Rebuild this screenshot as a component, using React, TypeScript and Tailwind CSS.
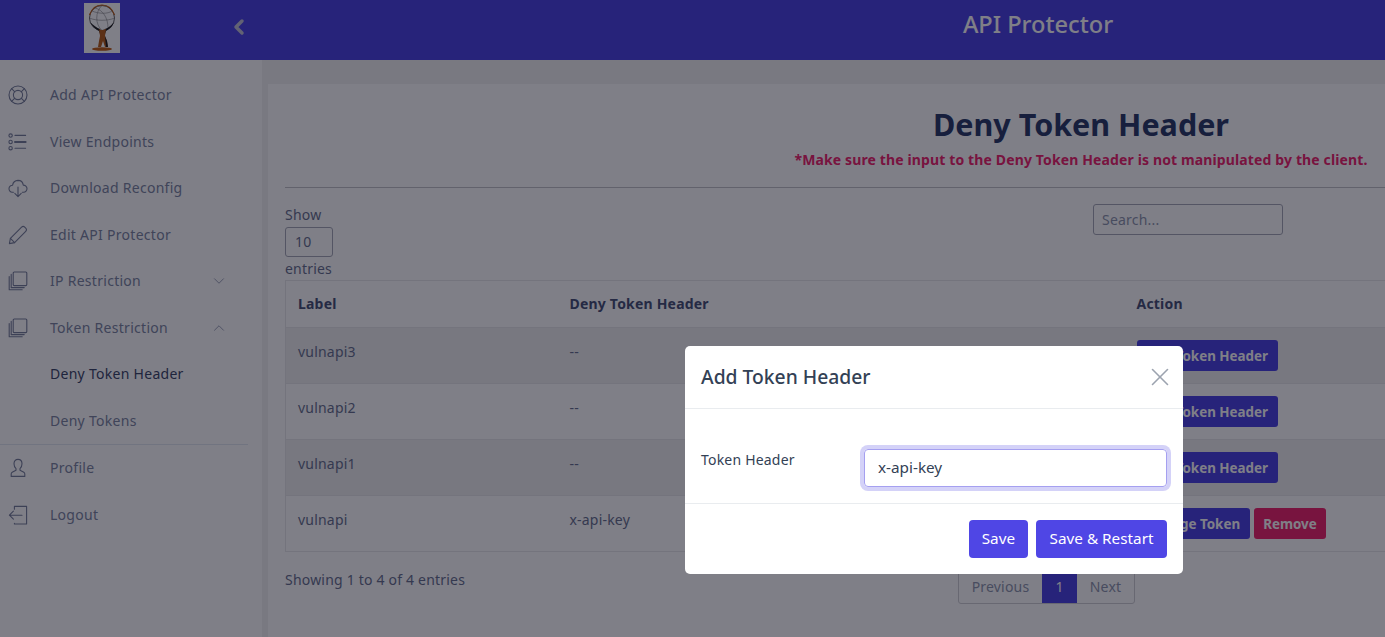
import { ChevronDown, ChevronLeft, ChevronUp, X } from "lucide-react";
import type { ReactNode } from "react";

const FONT = "font-['Noto_Sans',sans-serif]";

function Svg({ children }: { children: ReactNode }) {
  return (
    <svg viewBox="0 0 20 20" className="w-5 h-5 shrink-0" fill="none" stroke="currentColor" strokeWidth="1.1" strokeLinecap="round" strokeLinejoin="round">
      {children}
    </svg>
  );
}

const BuoyIcon = () => (
  <Svg>
    <circle cx="10" cy="10" r="9" />
    <circle cx="10" cy="10" r="4.6" />
    <path d="M3.6 3.6l3.2 3.2M16.4 3.6l-3.2 3.2M3.6 16.4l3.2-3.2M16.4 16.4l-3.2-3.2" />
  </Svg>
);
const ListIcon = () => (
  <Svg>
    <circle cx="2.6" cy="3.6" r="1.7" />
    <circle cx="2.6" cy="10" r="1.7" />
    <circle cx="2.6" cy="16.2" r="1.7" />
    <path d="M7 3.4h10.6M7 16.2h10.6" />
    <path d="M7 10h10.6" strokeWidth="2" />
  </Svg>
);
const CloudIcon = () => (
  <Svg>
    <path d="M5.4 14.2H4.2A3.4 3.4 0 0 1 1 10.6a3.5 3.5 0 0 1 3.6-3.4A5.6 5.6 0 0 1 10 2.4a5.5 5.5 0 0 1 5.3 4.700 3.6 3.6 0 0 1 3.7 3.5 3.5 3.5 0 0 1-3.4 3.6h-1.2" />
    <path d="M10 9v9.4M6.8 15.4l3.2 3.2 3.2-3.2" />
  </Svg>
);
const PenIcon = () => (
  <Svg>
    <path d="M1.4 18.6l1-5.2L13.6 2.2a2.2 2.2 0 0 1 3.1 0l1 1a2.2 2.2 0 0 1 0 3.1L6.6 17.6z" />
    <path d="M2.4 13.4l4.2 4.2" />
  </Svg>
);
const StackIcon = () => (
  <Svg>
    <rect x="5.2" y="1" width="13.6" height="13.6" rx="1" />
    <path d="M3.2 3.4v13.2h13M1.2 5.6v13.2h13" />
  </Svg>
);
const UserIcon = () => (
  <Svg>
    <path d="M10 1.4c2.6 0 4 2 4 4.4 0 2-.8 3.800-2 4.800v1.600l3.800 2c.8.4 1 .9 1 1.800v2.400H3.200v-2.400c0-.9.200-1.400 1-1.800L8 12.200v-1.600c-1.200-1-2-2.800-2-4.800 0-2.400 1.400-4.400 4-4.400z" />
  </Svg>
);
const LogoutIcon = () => (
  <Svg>
    <path d="M6.4 4.200V1.400h12.200v17.600H6.400v-.6" />
    <path d="M14 10.200H1.400M5.400 6.200l-4 4 4 4" />
  </Svg>
);

const AtlasLogo = () => (
  <div className="w-9 h-[50px] bg-white flex">
    <svg viewBox="0 0 36 50" className="w-9 h-[50px]" fill="none">
      <circle cx="18" cy="15" r="12.500" stroke="#555" strokeWidth="0.9" />
      <path d="M5.500 15c6 3 19 3 25 0M8 8c7 3 16 3 20 0M18 2.500c-7 6-7 19 0 25M11 5c8 2 13 10 13 20" stroke="#888" strokeWidth="0.6" />
      <path d="M5.500 12C8 5 13 2 18 2s10 3 12.500 10" stroke="#c2621a" strokeWidth="1.200" />
      <path d="M6 19c2 4 5 7 9 9l1 3h1l-1-5c-3-1-7-4-10-7zM30 19c-1 4-4 7-8 9l-1 3h-1l1-5c3-1 7-4 9-7z" fill="#222" />
      <path d="M15 26l2 1h2l3-1-1 7 2 5 1 6h-3l-2-6-2 6h-3l1-6 1-5z" fill="#b8601c" />
      <path d="M21 33l2 5 1 6h-2z" fill="#222" />
      <ellipse cx="18" cy="46" rx="10" ry="1.800" fill="#c2621a" />
    </svg>
  </div>
);

function NavItem({ icon, label, active, right }: { icon?: ReactNode; label: string; active?: boolean; right?: ReactNode }) {
  return (
    <a href="#" className={`flex items-center h-[46.500px] pl-2 pr-5 text-sm tracking-[0.28px] ${active ? "text-[#3f4a6b]" : "text-[#8088a3]"}`}>
      <span className="w-[42px] flex text-[#7a829c]">{icon}</span>
      <span className="flex-1">{label}</span>
      {right}
    </a>
  );
}

function Btn({ children, red }: { children: ReactNode; red?: boolean }) {
  return (
    <button className={`h-[31px] px-[9.500px] pt-[2px] rounded-[3px] text-[13.400px] font-bold text-white ${red ? "bg-[#f1296f]" : "bg-[#4f46e5]"}`}>
      {children}
    </button>
  );
}

const rows = [
  { label: "vulnapi3", header: "--", striped: true },
  { label: "vulnapi2", header: "--" },
  { label: "vulnapi1", header: "--", striped: true },
  { label: "vulnapi", header: "x-api-key", set: true },
];

export default function App() {
  return (
    <div className={`w-[1385px] h-[637px] overflow-hidden ${FONT}`}>
      <div className="relative w-[1868px] h-[637px] flex flex-col bg-[#f2f2f2]">
        {/* Top bar */}
        <header className="h-[60px] shrink-0 bg-[#4f46e5] flex items-center">
          <div className="w-[250px] pl-[84px] flex items-start justify-between h-full pt-[3px]">
            <AtlasLogo />
            <ChevronLeft className="w-6 h-6 mt-3 -mr-[1px] text-[#c4c4d8]" strokeWidth={3.500} />
          </div>
          <h1 className="flex-1 pr-[42px] pb-[10px] text-center text-[23.600px] font-medium text-white">API Protector</h1>
        </header>

        <div className="flex flex-1 min-h-0">
          {/* Sidebar */}
          <aside className="w-[262px] shrink-0 bg-white pt-[12px]">
            <nav className="w-[248px]">
              <NavItem icon={<BuoyIcon />} label="Add API Protector" />
              <NavItem icon={<ListIcon />} label="View Endpoints" />
              <NavItem icon={<CloudIcon />} label="Download Reconfig" />
              <NavItem icon={<PenIcon />} label="Edit API Protector" />
              <NavItem icon={<StackIcon />} label="IP Restriction" right={<ChevronDown className="w-[18px] h-[18px]" strokeWidth={1} />} />
              <NavItem icon={<StackIcon />} label="Token Restriction" right={<ChevronUp className="w-[18px] h-[18px]" strokeWidth={1} />} />
              <NavItem label="Deny Token Header" active />
              <NavItem label="Deny Tokens" />
              <div className="border-t border-[#e2e8f0]" />
              <NavItem icon={<UserIcon />} label="Profile" />
              <NavItem icon={<LogoutIcon />} label="Logout" />
            </nav>
          </aside>

          {/* Main */}
          <main className="flex-1 min-w-0 pl-[6px] pt-[24px]">
            <section className="w-[1626px] h-[600px] bg-white px-[17px] pt-[20px]">
              <div className="text-center h-[84px] border-b border-[#c4c4c8]">
                <h2 className="text-[30.500px] leading-[40px] font-bold text-[#2f3f6b]">Deny Token Header</h2>
                <p className="text-sm font-bold tracking-[0.130px] text-[#f1296f] mt-[6px]">*Make sure the input to the Deny Token Header is not manipulated by the client.</p>
              </div>

              <div className="flex h-[92px] text-sm tracking-[0.2px] text-[#6b7390]">
                <div className="pt-[15px] w-[808px]">
                  <div className="leading-[23px] mb-[1px]">Show</div>
                  <div className="w-12 h-[30px] border border-[#a8abb8] rounded-[3px] pl-[9px] leading-[28px]">10</div>
                  <div className="leading-[24px]">entries</div>
                </div>
                <div className="pt-[16px]">
                  <input readOnly placeholder="Search..." className="w-[190px] h-[31px] border border-[#a8abb8] rounded-[3px] px-2 text-sm placeholder:text-[#9098ae]" />
                </div>
              </div>

              <table className="w-[1592px] border border-[#e8e8ea] text-sm tracking-[0.2px] text-[#6b7390] table-fixed">
                <thead>
                  <tr className="h-[47px] text-left text-[#4a5578]">
                    <th className="w-[272px] pl-3 font-bold">Label</th>
                    <th className="w-[567px] pl-3 font-bold">Deny Token Header</th>
                    <th className="pl-3 font-bold">Action</th>
                  </tr>
                </thead>
                <tbody>
                  {rows.map((row) => (
                    <tr key={row.label} className={`h-[56px] border-t border-[#e8e8ea] ${row.striped ? "bg-[#f0f0f0]" : ""}`}>
                      <td className="pl-3 pb-2">{row.label}</td>
                      <td className="pl-3 pb-2">{row.header}</td>
                      <td className="pl-3 tracking-normal">
                        <div className="flex gap-1">
                          <Btn>{row.set ? "Change Token" : "Add Token Header"}</Btn>
                          {row.set && <Btn red>Remove</Btn>}
                        </div>
                      </td>
                    </tr>
                  ))}
                </tbody>
              </table>

              <div className="flex items-start text-sm tracking-[0.2px] text-[#6b7390] pt-[18px]">
                <div className="w-[673px] leading-[20px]">Showing 1 to 4 of 4 entries</div>
                <div className="flex h-[35px] -mt-[1px] border border-[#d0d0d4] rounded-[3px] text-[#9098ae] leading-[33px] text-center">
                  <span className="w-[83px]">Previous</span>
                  <span className="w-[35px] bg-[#4f46e5] text-white">1</span>
                  <span className="w-[57px]">Next</span>
                </div>
              </div>
            </section>
          </main>
        </div>

        {/* Modal */}
        <div className="absolute inset-0 bg-[#00000f]/50 flex justify-center items-start pt-[346px]">
          <div className="w-[498px] h-[228px] bg-white rounded-[5px] flex flex-col">
            <div className="h-[63px] border-b border-[#e9ecef] flex items-center justify-between pl-4 pr-2">
              <h3 className="text-[19.300px] font-medium text-[#334155]">Add Token Header</h3>
              <X className="w-[30px] h-[30px] text-[#9ca3af]" strokeWidth={1.300} />
            </div>
            <div className="h-[95px] border-b border-[#e9ecef] flex items-start pl-4 pr-4 text-sm tracking-[0.2px] text-[#334155]">
              <label className="w-[163px] pt-[41px]">Token Header</label>
              <input readOnly value="x-api-key" className="flex-1 h-[38px] mt-10 pb-[2px] rounded-[4px] border border-[#a5a0f0] ring-4 ring-[#d4d2f8] px-[13px] text-[15.300px] tracking-normal text-[#334155] outline-none" />
            </div>
            <div className="flex-1 flex justify-end items-start gap-2 pt-[16px] pr-4">
              <button className="h-[38px] px-[13px] pb-[2px] rounded-[4px] bg-[#4f46e5] text-white text-[15.300px]">Save</button>
              <button className="h-[38px] px-[13.500px] pb-[2px] rounded-[4px] bg-[#4f46e5] text-white text-[15.300px]">Save &amp; Restart</button>
            </div>
          </div>
        </div>
      </div>
    </div>
  );
}
